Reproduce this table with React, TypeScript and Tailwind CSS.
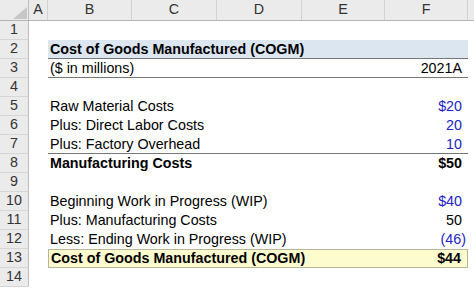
import React from "react";

type Row = {
  n: number;
  label?: string;
  value?: string;
  bold?: boolean;
  blue?: boolean;
  paren?: boolean;
  kind?: "title" | "underline" | "total";
};

const ROWS: Row[] = [
  { n: 1 },
  { n: 2, label: "Cost of Goods Manufactured (COGM)", bold: true, kind: "title" },
  { n: 3, label: "($ in millions)", value: "2021A", kind: "underline" },
  { n: 4 },
  { n: 5, label: "Raw Material Costs", value: "$20", blue: true },
  { n: 6, label: "Plus: Direct Labor Costs", value: "20", blue: true },
  { n: 7, label: "Plus: Factory Overhead", value: "10", blue: true, kind: "underline" },
  { n: 8, label: "Manufacturing Costs", value: "$50", bold: true },
  { n: 9 },
  { n: 10, label: "Beginning Work in Progress (WIP)", value: "$40", blue: true },
  { n: 11, label: "Plus: Manufacturing Costs", value: "50" },
  { n: 12, label: "Less: Ending Work in Progress (WIP)", value: "(46)", blue: true, paren: true },
  { n: 13, label: "Cost of Goods Manufactured (COGM)", value: "$44", bold: true, kind: "total" },
  { n: 14 },
];

const COLS = [
  { name: "A", w: "w-[19px]" },
  { name: "B", w: "w-[84px]" },
  { name: "C", w: "w-[85px]" },
  { name: "D", w: "w-[85px]" },
  { name: "E", w: "w-[83px]" },
  { name: "F", w: "w-[83px]" },
];

function SheetRow({ row }: { row: Row }) {
  const area =
    row.kind === "title"
      ? "bg-[#dce6f1] border-b border-[#777]"
      : row.kind === "underline"
        ? "border-b border-[#777]"
        : row.kind === "total"
          ? "bg-[#fdfccf] border border-[#b9b49a]"
          : "";

  return (
    <div className="flex h-[19px]">
      <div className="flex w-[29px] shrink-0 items-center justify-center border-b border-r border-[#d6d6d6] border-r-[#bdbdbd] bg-[#ebebeb] text-[14.3px] text-[#333]">
        {row.n}
      </div>
      <div className="w-[19px] shrink-0" />
      <div
        className={`flex w-[420px] shrink-0 items-center justify-between text-[14.3px] leading-none ${area} ${
          row.bold ? "font-bold" : ""
        } text-black`}
      >
        <span className="pl-[2px] whitespace-nowrap">{row.label}</span>
        {row.value && (
          <span
            className={`whitespace-nowrap ${row.paren ? "pr-[2px]" : "pr-[6px]"} ${
              row.blue ? "text-[#2323c3]" : ""
            }`}
          >
            {row.value}
          </span>
        )}
      </div>
      <div className="flex-1" />
    </div>
  );
}

export default function App() {
  return (
    <div
      className="h-[288px] w-[474px] overflow-hidden bg-white"
      style={{ fontFamily: '"Liberation Sans", Arial, sans-serif' }}
    >
      <div className="flex h-[21px] border-b border-[#b4b4b4] bg-[#ebebeb] text-[14.3px] text-[#333]">
        <div className="relative w-[29px] shrink-0 border-r border-[#bdbdbd]">
          <svg className="absolute left-[13px] top-[7px]" width="14" height="12" viewBox="0 0 14 12">
            <polygon points="14,0 14,12 0,12" fill="#c6c6c6" />
          </svg>
        </div>
        {COLS.map((c) => (
          <div
            key={c.name}
            className={`${c.w} flex shrink-0 items-center justify-center border-r border-[#d2d2d2]`}
          >
            {c.name}
          </div>
        ))}
        <div className="flex-1" />
      </div>
      {ROWS.map((r) => (
        <SheetRow key={r.n} row={r} />
      ))}
    </div>
  );
}
